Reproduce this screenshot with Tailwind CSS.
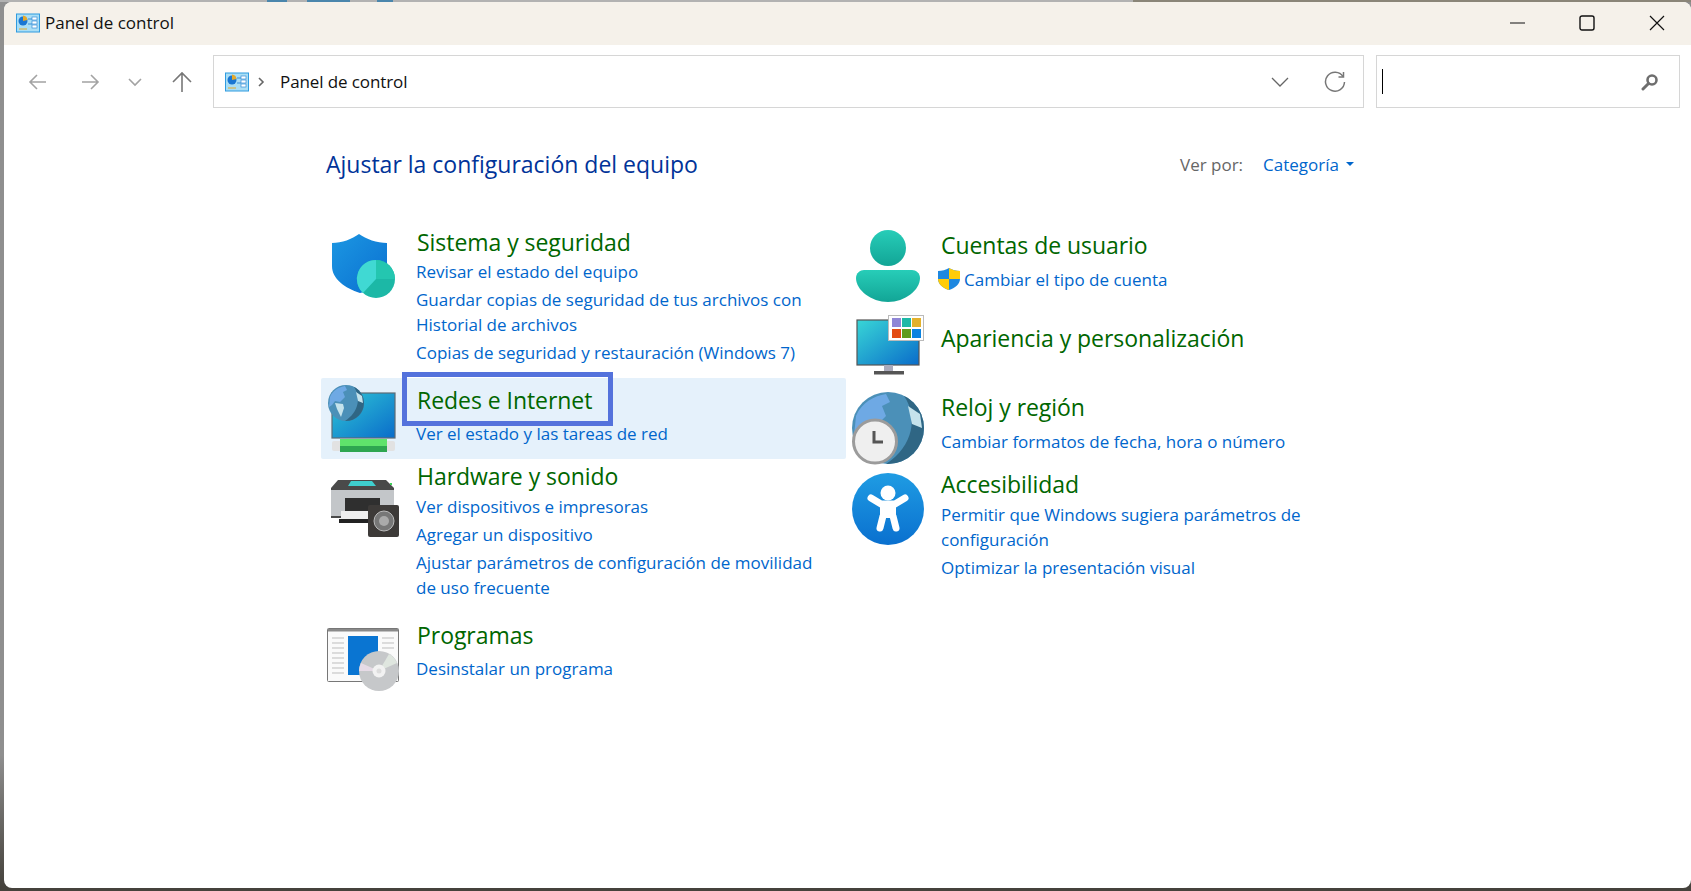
<!DOCTYPE html>
<html lang="es">
  <head>
    <meta charset="UTF-8" />
    <title>Panel de control</title>
    <script src="https://cdn.jsdelivr.net/npm/@tailwindcss/browser@4"></script>
  </head>
  <body class="h-[891px] w-[1691px] overflow-hidden bg-[#45423c] font-['Open_Sans','Noto_Sans',sans-serif]">
    <!-- Desktop showing behind the window -->
    <div class="flex h-[2px]">
      <div class="w-[267px] bg-[#b2b2b2]"></div>
      <div class="w-[20px] bg-[#4a86ac]"></div>
      <div class="w-[20px] bg-[#b2b2b2]"></div>
      <div class="w-[43px] bg-[#4a86ac]"></div>
      <div class="w-[27px] bg-[#b2b2b2]"></div>
      <div class="w-[16px] bg-[#4a86ac]"></div>
      <div class="w-[740px] bg-[#b2b2b2]"></div>
      <div class="flex-1 bg-[#8a8578]"></div>
    </div>
    <div class="h-[886px] bg-linear-to-b from-[#8f8f8f] via-[#8f8f8f] via-85% to-[#45423c] pl-[4px]">
      <div class="h-[886px] w-[1687px] overflow-hidden rounded-[8px] bg-white">
        <!-- Title bar -->
        <div class="flex h-[43px] items-center bg-[#f5f1ea] pb-[2px] pl-[12px]">
          <svg class="h-[24px] w-[24px]" viewBox="0 0 24 24">
            <rect x="0.5" y="3" width="23" height="18" fill="#a9def5" stroke="#2f9be0" />
            <circle cx="7" cy="10" r="4.5" fill="#1976d2" />
            <path d="M7 10V4.5A5 5 0 0 1 11.5 9Z" fill="#e3a92c" />
            <path d="M12 8h4M12 13h4" stroke="#3b8fd8" />
            <rect x="16" y="6" width="5" height="3" fill="#fff" stroke="#3b8fd8" stroke-width=".7" />
            <rect x="16" y="10" width="5" height="3" fill="#fff" stroke="#3b8fd8" stroke-width=".7" />
            <rect x="16" y="14" width="5" height="3" fill="#fff" stroke="#3b8fd8" stroke-width=".7" />
            <path d="M3 18h8" stroke="#e3a92c" stroke-width="1.2" />
          </svg>
          <span class="ml-[5px] text-[17px] text-[#111]">Panel de control</span>
          <div class="ml-auto flex items-center">
            <svg class="h-[16px] w-[16px]" viewBox="0 0 16 16"><path d="M0 8h15" stroke="#111" stroke-width="1.1" /></svg>
            <svg class="ml-[53px] h-[16px] w-[16px]" viewBox="0 0 16 16"><rect x="1" y="1" width="14" height="14" rx="2" fill="none" stroke="#111" stroke-width="1.4" /></svg>
            <svg class="ml-[54px] mr-[26px] h-[16px] w-[16px]" viewBox="0 0 16 16"><path d="M1 1l14 14M15 1L1 15" stroke="#111" stroke-width="1.2" /></svg>
          </div>
        </div>

        <!-- Address row -->
        <div class="flex h-[75px] items-center pb-[2px]">
          <svg class="ml-[24px] h-[20px] w-[20px] text-[#a3a3a3]" viewBox="0 0 20 20" fill="none" stroke="currentColor" stroke-width="1.6"><path d="M18 10H2M9 3l-7 7 7 7" /></svg>
          <svg class="ml-[32px] h-[20px] w-[20px] text-[#a3a3a3]" viewBox="0 0 20 20" fill="none" stroke="currentColor" stroke-width="1.6"><path d="M2 10h16M11 3l7 7-7 7" /></svg>
          <svg class="ml-[28px] h-[14px] w-[14px] text-[#a3a3a3]" viewBox="0 0 14 14" fill="none" stroke="currentColor" stroke-width="1.6"><path d="M1 4l6 6 6-6" /></svg>
          <svg class="ml-[29px] h-[22px] w-[22px] text-[#777]" viewBox="0 0 22 22" fill="none" stroke="currentColor" stroke-width="1.6"><path d="M11 21V2M2 11l9-9 9 9" /></svg>
          <!-- address box -->
          <div class="ml-[20px] flex h-[53px] w-[1151px] items-center border-[1.5px] border-[#d6d6d6] pl-[11px]">
            <svg class="h-[24px] w-[24px]" viewBox="0 0 24 24">
              <rect x="0.5" y="3" width="23" height="18" fill="#a9def5" stroke="#2f9be0" />
              <circle cx="7" cy="10" r="4.5" fill="#1976d2" />
              <path d="M7 10V4.5A5 5 0 0 1 11.5 9Z" fill="#e3a92c" />
              <path d="M12 8h4M12 13h4" stroke="#3b8fd8" />
              <rect x="16" y="6" width="5" height="3" fill="#fff" stroke="#3b8fd8" stroke-width=".7" />
              <rect x="16" y="10" width="5" height="3" fill="#fff" stroke="#3b8fd8" stroke-width=".7" />
              <rect x="16" y="14" width="5" height="3" fill="#fff" stroke="#3b8fd8" stroke-width=".7" />
              <path d="M3 18h8" stroke="#e3a92c" stroke-width="1.2" />
            </svg>
            <svg class="ml-[9px] h-[10px] w-[7px] text-[#666]" viewBox="0 0 7 10" fill="none" stroke="currentColor" stroke-width="1.6"><path d="M1 1l4 4-4 4" /></svg>
            <span class="ml-[15px] text-[17px] tracking-[-0.1px] text-[#111]">Panel de control</span>
            <svg class="ml-auto h-[10px] w-[18px] text-[#666]" viewBox="0 0 18 10" fill="none" stroke="currentColor" stroke-width="1.3"><path d="M1 1l8 8 8-8" /></svg>
            <svg class="ml-[35px] mr-[17px] h-[22px] w-[22px] text-[#777]" viewBox="0 0 22 22" fill="none" stroke="currentColor" stroke-width="1.5"><path d="M19 5.5A9.5 9.5 0 1 0 20.5 11" /><path d="M19.5 1v5h-5" /></svg>
          </div>
          <!-- search box -->
          <div class="ml-[12px] flex h-[53px] w-[304px] items-center border-[1.5px] border-[#d6d6d6] pl-[5px]">
            <div class="h-[25px] w-px bg-black"></div>
            <svg class="ml-auto mr-[20px] h-[18px] w-[18px] text-[#6e6e6e]" viewBox="0 0 18 18" fill="none" stroke="currentColor"><circle cx="11" cy="7" r="4.5" stroke-width="2.6" /><path d="M7.5 10.5L2 16" stroke-width="3" stroke-linecap="round" /></svg>
          </div>
        </div>

        <!-- Content -->
        <div class="w-[1350px] pl-[317px]">
          <div class="flex h-[106px] items-center justify-between pb-[17px] pl-[5px]">
            <h1 class="text-[23px] text-[#003399]">Ajustar la configuración del equipo</h1>
            <div class="flex items-center text-[17px]">
              <span class="text-[#666]">Ver por:</span>
              <span class="ml-[20px] text-[#0066cc]">Categoría</span>
              <span class="mb-[2px] ml-[7px] h-0 w-0 border-x-[4px] border-t-[4px] border-x-transparent border-t-[#0066cc]"></span>
            </div>
          </div>
          <div class="flex">
            <!-- Left column -->
            <div class="w-[525px]">
              <section class="flex h-[152px]">
                <svg class="h-[84px] w-[84px] shrink-0" viewBox="0 0 84 84">
                  <defs>
                    <linearGradient id="sh" x1="0" y1="0" x2="1" y2="1"><stop offset="0" stop-color="#1c97e2" /><stop offset="1" stop-color="#0a6fd0" /></linearGradient>
                  </defs>
                  <path d="M38 8C31 13 21 17 11 17V40C11 53 24 62 39 67C50 65 66 50 66 40V17C56 17 45 13 38 8Z" fill="url(#sh)" />
                  <circle cx="55" cy="53" r="19" fill="#1cb8a6" />
                  <path d="M55 53V34A19 19 0 0 0 42 67Z" fill="#40d9d3" />
                  <path d="M55 53H74A19 19 0 0 0 55 34Z" fill="#24c6b0" />
                </svg>
                <div class="ml-[11px]">
                  <h2 class="h-[32px] pl-[1px] text-[23px] leading-[32px] tracking-[-0.05px] text-[#006600]">Sistema y seguridad</h2>
                  <a class="mt-[1px] block text-[17px] leading-[25px] text-[#0066cc]">Revisar el estado del equipo</a>
                  <a class="mt-[3px] block text-[17px] leading-[25px] text-[#0066cc]">Guardar copias de seguridad de tus archivos con<br />Historial de archivos</a>
                  <a class="mt-[3px] block text-[17px] leading-[25px] text-[#0066cc]">Copias de seguridad y restauración (Windows 7)</a>
                </div>
              </section>
              <section class="relative flex h-[81px] rounded-[2px] bg-[#e5f1fb] pt-[6px]">
                <svg class="-mt-[6px] h-[84px] w-[84px] shrink-0" viewBox="0 0 84 84">
                  <defs>
                    <linearGradient id="mon" x1="0" y1="0" x2="1" y2="1"><stop offset="0" stop-color="#2fc7d6" /><stop offset="1" stop-color="#0a6cca" /></linearGradient>
                    <clipPath id="gl1"><circle cx="36" cy="36" r="36" /></clipPath>
                  </defs>
                  <rect x="11" y="15" width="63" height="45" fill="url(#mon)" stroke="#5d6b75" stroke-width="1.2" />
                  <rect x="11" y="63" width="63" height="10" rx="2" fill="#e2e2e2" />
                  <rect x="19" y="61" width="47" height="7" fill="#5fe36b" />
                  <rect x="19" y="68" width="47" height="6" fill="#2ea650" />
                  <g transform="translate(7 7) scale(.5)">
                    <circle cx="36" cy="36" r="36" fill="#4b90b8" />
                    <g clip-path="url(#gl1)">
                      <path d="M52 4C66 24 62 54 34 72H72V4Z" fill="#2f6684" />
                      <path d="M4 24C10 10 22 4 34 2L38 10 30 14 34 24 24 34 14 32 8 40 2 44Z" fill="#6ea9e4" />
                      <path d="M56 14L68 22 70 36 60 32Z" fill="#c5e3ec" />
                      <path d="M14 36L30 38 32 46 26 64 18 48Z" fill="#c5e3ec" />
                    </g>
                  </g>
                </svg>
                <div class="ml-[11px]">
                  <h2 class="h-[32px] pl-[1px] text-[23px] leading-[32px] tracking-[-0.05px] text-[#006600]">Redes e Internet</h2>
                  <a class="mt-[4.5px] block text-[17px] leading-[25px] text-[#0066cc]">Ver el estado y las tareas de red</a>
                </div>
                <!-- focus rectangle -->
                <div class="absolute left-[81px] top-[-6px] h-[54px] w-[211px] border-[5px] border-[#5472dc]"></div>
              </section>
              <section class="mt-[1px] flex h-[159px]">
                <svg class="h-[84px] w-[84px] shrink-0" viewBox="0 0 84 84">
                  <path d="M10 28L17 20H65L73 28V58H10Z" fill="#4a4a4a" />
                  <path d="M10 30H73V56H10Z" fill="#c3c6c9" />
                  <path d="M30 21L27 26H55L51 21Z" fill="#3fd0d0" />
                  <rect x="24" y="38" width="35" height="14" fill="#2f2f2f" />
                  <path d="M20 51H60V59H20Z" fill="#eee" />
                  <path d="M18 59H62V63H18Z" fill="#222" />
                  <rect x="69" y="23" width="2" height="2" fill="#3fd05a" />
                  <rect x="47" y="45" width="31" height="32" rx="2" fill="#3d3a38" />
                  <circle cx="63" cy="61" r="10" fill="#777" stroke="#bbb" />
                  <circle cx="63" cy="61" r="5" fill="#aaa" />
                </svg>
                <div class="ml-[11px]">
                  <h2 class="h-[32px] pl-[1px] text-[23px] leading-[32px] tracking-[-0.05px] text-[#006600]">Hardware y sonido</h2>
                  <a class="mt-[1.5px] block text-[17px] leading-[25px] text-[#0066cc]">Ver dispositivos e impresoras</a>
                  <a class="mt-[3px] block text-[17px] leading-[25px] text-[#0066cc]">Agregar un dispositivo</a>
                  <a class="mt-[3px] block text-[17px] leading-[25px] text-[#0066cc]">Ajustar parámetros de configuración de movilidad<br />de uso frecuente</a>
                </div>
              </section>
              <section class="flex">
                <svg class="h-[84px] w-[84px] shrink-0" viewBox="0 0 84 84">
                  <rect x="6.5" y="9.5" width="71" height="53" rx="1" fill="#fafafa" stroke="#777" />
                  <rect x="7" y="10" width="70" height="2.5" fill="#8a8a8a" />
                  <path d="M11 19h12M11 24h12M11 29h12M11 34h12M11 39h12M11 44h12M11 49h12M11 54h12M61 19h12M61 24h12M61 29h12" stroke="#bdbdbd" />
                  <rect x="27" y="17" width="30" height="39" fill="#0a75d2" />
                  <circle cx="58" cy="52" r="20" fill="#c6c8ca" />
                  <path d="M58 52L76 44A20 20 0 0 0 68 35Z" fill="#dfe6df" />
                  <path d="M58 52L40 44A20 20 0 0 0 38 52Z" fill="#e6dbe6" />
                  <circle cx="58" cy="52" r="6.5" fill="#f2f2f2" />
                  <circle cx="58" cy="52" r="2.5" fill="#ddd" />
                </svg>
                <div class="ml-[11px]">
                  <h2 class="h-[32px] pl-[1px] text-[23px] leading-[32px] tracking-[-0.05px] text-[#006600]">Programas</h2>
                  <a class="mt-[5px] block text-[17px] leading-[25px] text-[#0066cc]">Desinstalar un programa</a>
                </div>
              </section>
            </div>
            <!-- Right column -->
            <div class="ml-[5px]">
              <section class="flex h-[88px]">
                <svg class="h-[88px] w-[88px] shrink-0" viewBox="0 0 88 88">
                  <defs>
                    <linearGradient id="us" x1="0" y1="0" x2="0" y2="1"><stop offset="0" stop-color="#27cdb8" /><stop offset="1" stop-color="#12a596" /></linearGradient>
                  </defs>
                  <circle cx="37" cy="22" r="18" fill="url(#us)" />
                  <path d="M5 52C5 47 9 44 13 44H61C65 44 69 47 69 52C69 64 54 76 37 76C20 76 5 64 5 52Z" fill="url(#us)" />
                </svg>
                <div class="ml-[2px]">
                  <h2 class="mt-[3px] h-[32px] text-[23px] leading-[32px] tracking-[-0.05px] text-[#006600]">Cuentas de usuario</h2>
                  <div class="-ml-[3px] mt-[5.5px] flex items-center">
                    <svg class="h-[22px] w-[22px]" viewBox="0 0 22 22">
                      <path d="M11 0C8 2 4 3 0 3V11C0 16 5 20 11 22C17 20 22 16 22 11V3C18 3 14 2 11 0Z" fill="#1e88e0" />
                      <path d="M11 0C14 2 18 3 22 3V11H11ZM11 11V22C5 20 0 16 0 11Z" fill="#ffcc0a" />
                    </svg>
                    <a class="ml-[4px] text-[17px] leading-[25px] text-[#0066cc]">Cambiar el tipo de cuenta</a>
                  </div>
                </div>
              </section>
              <section class="flex h-[78px]">
                <svg class="h-[88px] w-[88px] shrink-0" viewBox="0 0 88 88">
                  <defs>
                    <linearGradient id="mon2" x1="0" y1="0" x2="1" y2="1"><stop offset="0" stop-color="#38d6d6" /><stop offset="1" stop-color="#0a6cca" /></linearGradient>
                  </defs>
                  <rect x="6" y="6" width="62" height="45" fill="url(#mon2)" stroke="#555" stroke-width="1.2" />
                  <rect x="33" y="51" width="9" height="7" fill="#aab" />
                  <rect x="23" y="57" width="30" height="3.5" fill="#555" />
                  <rect x="37.5" y="1.5" width="35" height="25" fill="#fff" stroke="#bbb" />
                  <rect x="41" y="4" width="9" height="9" fill="#8f86d6" />
                  <rect x="51" y="4" width="9" height="9" fill="#1db8a6" />
                  <rect x="61" y="4" width="9" height="9" fill="#e3b12c" />
                  <rect x="41" y="15" width="9" height="9" fill="#e34c13" />
                  <rect x="51" y="15" width="9" height="9" fill="#5e9c1e" />
                  <rect x="61" y="15" width="9" height="9" fill="#0a83e0" />
                </svg>
                <div class="ml-[2px]">
                  <h2 class="mt-[8px] h-[32px] text-[23px] leading-[32px] tracking-[-0.05px] text-[#006600]">Apariencia y personalización</h2>
                </div>
              </section>
              <section class="flex h-[81px]">
                <svg class="h-[88px] w-[88px] shrink-0" viewBox="0 0 88 88">
                  <defs>
                    <clipPath id="gl"><circle cx="36" cy="36" r="36" /></clipPath>
                  </defs>
                  <g transform="translate(1 0)">
                    <circle cx="36" cy="36" r="36" fill="#4b90b8" />
                    <g clip-path="url(#gl)">
                      <path d="M52 4C66 24 62 54 34 72H72V4Z" fill="#2f6684" />
                      <path d="M4 24C10 10 22 4 34 2L38 10 30 14 34 24 24 34 14 32 8 40 2 44Z" fill="#6ea9e4" />
                      <path d="M56 14L68 22 70 36 60 32Z" fill="#c5e3ec" />
                    </g>
                  </g>
                  <circle cx="24" cy="49.5" r="21.5" fill="#efefef" stroke="#9b9b9b" stroke-width="3" />
                  <path d="M23 39V50H32" fill="none" stroke="#555" stroke-width="3" />
                </svg>
                <div class="ml-[2px]">
                  <h2 class="mt-[-1px] h-[32px] text-[23px] leading-[32px] tracking-[-0.05px] text-[#006600]">Reloj y región</h2>
                  <a class="mt-[5.5px] block text-[17px] leading-[25px] text-[#0066cc]">Cambiar formatos de fecha, hora o número</a>
                </div>
              </section>
              <section class="flex">
                <svg class="h-[88px] w-[88px] shrink-0" viewBox="0 0 88 88">
                  <defs>
                    <linearGradient id="ac" x1="0" y1="0" x2="0" y2="1"><stop offset="0" stop-color="#1f9ce3" /><stop offset="1" stop-color="#0a70cf" /></linearGradient>
                  </defs>
                  <circle cx="37" cy="36" r="36" fill="url(#ac)" />
                  <circle cx="37" cy="20" r="7.5" fill="#fff" />
                  <path d="M20 25L30 31H44L54 25" fill="none" stroke="#fff" stroke-width="7" stroke-linecap="round" stroke-linejoin="round" />
                  <rect x="29" y="30" width="16" height="15" fill="#fff" />
                  <path d="M32 43L29 55M42 43L45 55" fill="none" stroke="#fff" stroke-width="7" stroke-linecap="round" />
                </svg>
                <div class="ml-[2px]">
                  <h2 class="mt-[-5px] h-[32px] text-[23px] leading-[32px] tracking-[-0.05px] text-[#006600]">Accesibilidad</h2>
                  <a class="mt-[1.5px] block text-[17px] leading-[25px] text-[#0066cc]">Permitir que Windows sugiera parámetros de<br />configuración</a>
                  <a class="mt-[3px] block text-[17px] leading-[25px] text-[#0066cc]">Optimizar la presentación visual</a>
                </div>
              </section>
            </div>
          </div>
        </div>
      </div>
    </div>
  </body>
</html>
